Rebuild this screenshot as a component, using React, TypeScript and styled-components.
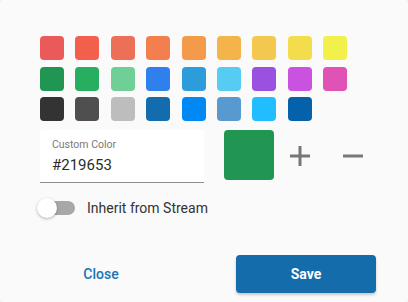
import React, { useState } from 'react'
import styled, { createGlobalStyle } from 'styled-components'

const GlobalStyle = createGlobalStyle`
  html, body {
    margin: 0;
    padding: 0;
    background: #ffffff;
  }
  body {
    font-family: Roboto, 'Liberation Sans', sans-serif;
  }
`

const Card = styled.div`
  box-sizing: border-box;
  width: 408px;
  height: 302px;
  background: #fafafa;
  border-radius: 4px;
  box-shadow: 0 0 0 1px #ececec, 0 1px 2px rgba(0, 0, 0, 0.06);
  padding: 36px 30px 0 40px;
  display: flex;
  flex-direction: column;
`

const Palette = styled.div`
  display: grid;
  grid-template-columns: repeat(9, 24px);
  column-gap: 11.4px;
  row-gap: 6.5px;
`

const Swatch = styled.button<{ $color: string }>`
  width: 24px;
  height: 24px;
  border: none;
  padding: 0;
  border-radius: 4px;
  background: ${(p) => p.$color};
  cursor: pointer;
`

const CustomRow = styled.div`
  display: flex;
  align-items: flex-start;
  margin-top: 8.5px;
`

const Field = styled.label`
  box-sizing: border-box;
  width: 164px;
  height: 53px;
  background: #ffffff;
  border-bottom: 1px solid #8f8f8f;
  border-radius: 3px 3px 0 0;
  padding: 8px 12px 0;
  display: flex;
  flex-direction: column;
`

const FieldLabel = styled.span`
  font-size: 10.5px;
  color: #7a7a7a;
  line-height: 13px;
`

const FieldInput = styled.input`
  border: none;
  outline: none;
  background: transparent;
  padding: 0;
  margin-top: 5px;
  font-family: Roboto, 'Liberation Sans', sans-serif;
  font-size: 15px;
  color: #2b2b2b;
  line-height: 18px;
  width: 100%;
`

const Preview = styled.div<{ $color: string }>`
  width: 50px;
  height: 50px;
  border-radius: 4px;
  background: ${(p) => p.$color};
  margin-left: 20px;
`

const IconButton = styled.button`
  width: 20px;
  height: 20px;
  border: none;
  background: transparent;
  padding: 0;
  margin-top: 16px;
  display: flex;
  cursor: pointer;
`

const PlusButton = styled(IconButton)`
  margin-left: 16px;
`

const MinusButton = styled(IconButton)`
  margin-left: 33px;
`

const ToggleRow = styled.div`
  display: flex;
  align-items: center;
  margin-top: 15px;
  margin-left: -3px;
`

const Switch = styled.div`
  position: relative;
  width: 38px;
  height: 20px;
  display: flex;
  align-items: center;
`

const Track = styled.div`
  margin-left: 4px;
  width: 34px;
  height: 14px;
  border-radius: 7px;
  background: #a8a8a8;
`

const Knob = styled.div`
  position: absolute;
  left: 0;
  top: 0;
  width: 20px;
  height: 20px;
  border-radius: 50%;
  background: #ffffff;
  box-shadow: 0 1px 3px rgba(0, 0, 0, 0.3);
`

const ToggleLabel = styled.span`
  margin-left: 12px;
  font-size: 14px;
  color: #333333;
`

const Footer = styled.div`
  display: flex;
  justify-content: space-between;
  margin-top: 37px;
  margin-left: -9px;
  margin-right: 2px;
`

const Button = styled.button<{ $primary?: boolean }>`
  width: 140px;
  height: 38px;
  border: none;
  border-radius: 4px;
  font-family: Roboto, 'Liberation Sans', sans-serif;
  font-size: 14px;
  font-weight: ${(p) => (p.$primary ? 700 : 500)};
  cursor: pointer;
  background: ${(p) => (p.$primary ? '#146cab' : 'transparent')};
  color: ${(p) => (p.$primary ? '#ffffff' : '#1d73b3')};
  box-shadow: ${(p) => (p.$primary ? '0 2px 3px rgba(0, 0, 0, 0.2)' : 'none')};
`

const colors = [
  '#eb5a5a', '#f25f4c', '#ec7058', '#f47f4e', '#f49a4b', '#f4b34b', '#f4c74e', '#f4dd4c', '#f2f04a',
  '#219653', '#27ae60', '#6fcf97', '#2f80ed', '#2d9cdb', '#56ccf2', '#9b51e0', '#c952e0', '#e052b4',
  '#333333', '#4f4f4f', '#bdbdbd', '#136cae', '#0089f5', '#5899cf', '#22bdff', '#0461aa',
]

const App = () => {
  const [color, setColor] = useState('#219653')

  return (
    <Card>
      <GlobalStyle />
      <Palette>
        {colors.map((c) => (
          <Swatch key={c} $color={c} onClick={() => setColor(c)} />
        ))}
      </Palette>
      <CustomRow>
        <Field>
          <FieldLabel>Custom Color</FieldLabel>
          <FieldInput value={color} onChange={(ev) => setColor(ev.target.value)} />
        </Field>
        <Preview $color={color} />
        <PlusButton aria-label="Add">
          <svg width="20" height="20" viewBox="0 0 20 20">
            <path d="M10 0v20M0 10h20" stroke="#777" strokeWidth="3" />
          </svg>
        </PlusButton>
        <MinusButton aria-label="Remove">
          <svg width="20" height="20" viewBox="0 0 20 20">
            <path d="M0 10h20" stroke="#777" strokeWidth="3" />
          </svg>
        </MinusButton>
      </CustomRow>
      <ToggleRow>
        <Switch>
          <Track />
          <Knob />
        </Switch>
        <ToggleLabel>Inherit from Stream</ToggleLabel>
      </ToggleRow>
      <Footer>
        <Button>Close</Button>
        <Button $primary>Save</Button>
      </Footer>
    </Card>
  )
}

export default App
